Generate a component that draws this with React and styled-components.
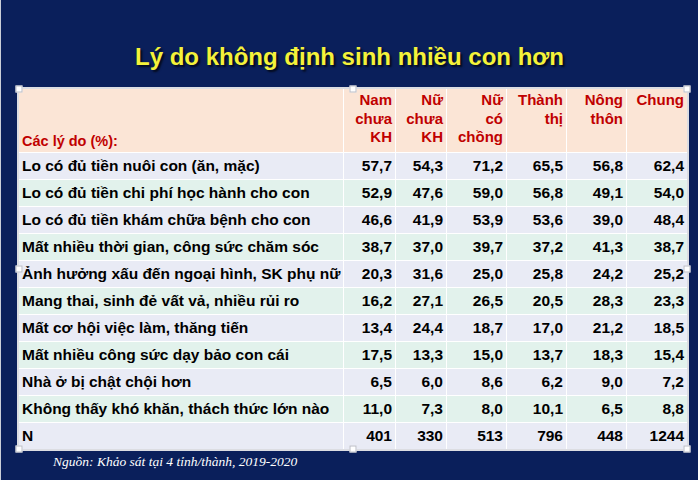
import React from "react";
import styled, { createGlobalStyle } from "styled-components";

const GlobalStyle = createGlobalStyle`
  html, body {
    margin: 0;
    padding: 0;
    background: #0a1f5b;
  }
`;

const Slide = styled.div`
  width: 698px;
  height: 480px;
  box-sizing: border-box;
  background: #0a1f5b;
  border-left: 1px solid #c9cdd8;
  display: flex;
  flex-direction: column;
  overflow: hidden;
`;

const Title = styled.h1`
  margin: 42px 0 0 0;
  height: 30px;
  line-height: 30px;
  text-align: center;
  font-family: "Liberation Sans", Arial, sans-serif;
  font-weight: bold;
  font-size: 24px;
  color: #f4f23a;
  text-shadow: 2px 2px 2px rgba(0, 0, 0, 0.7);
`;

const Frame = styled.div`
  position: relative;
  margin: 15px 0 0 16px;
  width: 672px;
  box-sizing: border-box;
  border: 2px solid #dcdde2;
`;

const Grid = styled.div`
  display: grid;
  grid-template-columns: 324px 51px 50px 59px 59px 59px 60px;
  grid-template-rows: 63px repeat(11, 26px);
  gap: 1px;
  background: #ffffff;
  font-family: "Liberation Sans", Arial, sans-serif;
  font-weight: bold;
  font-size: 15.5px;
`;

const rowColors = {
  head: "#fbe5d6",
  odd: "#e9ebf5",
  even: "#e2f2ec",
};

const HeadLabel = styled.div`
  background: ${rowColors.head};
  color: #c00000;
  display: flex;
  align-items: flex-end;
  padding: 0 0 2px 3px;
  line-height: 18px;
  font-size: 14.5px;
`;

const HeadCell = styled.div`
  background: ${rowColors.head};
  color: #c00000;
  text-align: right;
  padding: 2px 3px 0 0;
  line-height: 18.5px;
  font-size: 15px;
`;

const Label = styled.div`
  background: ${(p) => rowColors[p.$tone]};
  color: #000;
  display: flex;
  align-items: center;
  padding-left: 3px;
  white-space: nowrap;
`;

const Value = styled.div`
  background: ${(p) => rowColors[p.$tone]};
  color: #000;
  display: flex;
  align-items: center;
  justify-content: flex-end;
  padding-right: 3px;
`;

const Handle = styled.span`
  position: absolute;
  width: 5px;
  height: 5px;
  background: #ffffff;
  border: 1px solid #b9bcc6;
  left: ${(p) => p.$x};
  top: ${(p) => p.$y};
  transform: translate(-50%, -50%);
`;

const Source = styled.div`
  padding: 3px 0 0 52px;
  font-family: "Liberation Serif", "Times New Roman", serif;
  font-style: italic;
  font-size: 13.5px;
  line-height: 16px;
  color: #ffffff;
`;

const headers = [
  ["Nam", "chưa", "KH"],
  ["Nữ", "chưa", "KH"],
  ["Nữ", "có", "chồng"],
  ["Thành", "thị"],
  ["Nông", "thôn"],
  ["Chung"],
];

const rows = [
  ["Lo có đủ tiền nuôi con (ăn, mặc)", "57,7", "54,3", "71,2", "65,5", "56,8", "62,4"],
  ["Lo có đủ tiền chi phí học hành cho con", "52,9", "47,6", "59,0", "56,8", "49,1", "54,0"],
  ["Lo có đủ tiền khám chữa bệnh cho con", "46,6", "41,9", "53,9", "53,6", "39,0", "48,4"],
  ["Mất nhiều thời gian, công sức chăm sóc", "38,7", "37,0", "39,7", "37,2", "41,3", "38,7"],
  ["Ảnh hưởng xấu đến ngoại hình, SK phụ nữ", "20,3", "31,6", "25,0", "25,8", "24,2", "25,2"],
  ["Mang thai, sinh đẻ vất vả, nhiều rủi ro", "16,2", "27,1", "26,5", "20,5", "28,3", "23,3"],
  ["Mất cơ hội việc làm, thăng tiến", "13,4", "24,4", "18,7", "17,0", "21,2", "18,5"],
  ["Mất nhiều công sức dạy bảo con cái", "17,5", "13,3", "15,0", "13,7", "18,3", "15,4"],
  ["Nhà ở bị chật chội hơn", "6,5", "6,0", "8,6", "6,2", "9,0", "7,2"],
  ["Không thấy khó khăn, thách thức lớn nào", "11,0", "7,3", "8,0", "10,1", "6,5", "8,8"],
  ["N", "401", "330", "513", "796", "448", "1244"],
];

const handles = [
  ["0%", "0%"],
  ["50%", "0%"],
  ["100%", "0%"],
  ["0%", "50%"],
  ["100%", "50%"],
  ["0%", "100%"],
  ["50%", "100%"],
  ["100%", "100%"],
];

export default function App() {
  return (
    <>
      <GlobalStyle />
      <Slide>
        <Title>Lý do không định sinh nhiều con hơn</Title>
        <Frame>
          <Grid>
            <HeadLabel>Các lý do (%):</HeadLabel>
            {headers.map((lines, i) => (
              <HeadCell key={i}>
                {lines.map((l, j) => (
                  <div key={j}>{l}</div>
                ))}
              </HeadCell>
            ))}
            {rows.map((row, r) => {
              const tone = r % 2 === 0 ? "odd" : "even";
              return (
                <React.Fragment key={r}>
                  <Label $tone={tone}>{row[0]}</Label>
                  {row.slice(1).map((v, c) => (
                    <Value key={c} $tone={tone}>
                      {v}
                    </Value>
                  ))}
                </React.Fragment>
              );
            })}
          </Grid>
          {handles.map(([x, y], i) => (
            <Handle key={i} $x={x} $y={y} />
          ))}
        </Frame>
        <Source>Nguồn: Khảo sát tại 4 tỉnh/thành, 2019-2020</Source>
      </Slide>
    </>
  );
}
